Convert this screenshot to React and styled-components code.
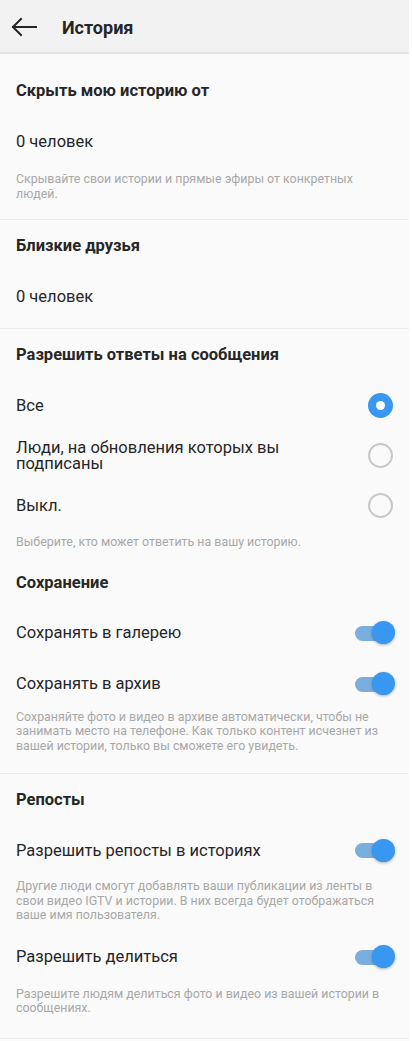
import React from 'react';
import styled, { createGlobalStyle } from 'styled-components';

const GlobalStyle = createGlobalStyle`
  html, body {
    margin: 0;
    padding: 0;
    background: #ffffff;
  }
  body {
    font-family: Roboto, "Noto Sans", "Liberation Sans", sans-serif;
    -webkit-font-smoothing: antialiased;
  }
`;

const Page = styled.div`
  width: 409px;
  min-height: 1041px;
  background: #fafafa;
  color: #262626;
`;

const Header = styled.header`
  height: 52px;
  display: flex;
  align-items: center;
  background: #f2f2f2;
  border-bottom: 2px solid #e3e3e3;
  padding-left: 11px;
`;

const BackButton = styled.button`
  border: 0;
  background: none;
  padding: 0;
  width: 26px;
  height: 22px;
  display: flex;
  align-items: center;
  margin-top: 2px;
`;

const HeaderTitle = styled.h1`
  margin: 0 0 0 25px;
  font-size: 18px;
  font-weight: 700;
  color: #262626;
  padding-top: 2px;
`;

const Content = styled.main`
  padding-top: 11px;
`;

const Section = styled.section`
  padding-bottom: ${p => p.$pb || 0}px;
  border-bottom: 1px solid #ececec;
`;

const Row = styled.div`
  height: ${p => p.$h || 51}px;
  margin-top: ${p => p.$mt || 0}px;
  display: flex;
  align-items: center;
  justify-content: space-between;
  padding: 0 16px;
`;

const SectionTitle = styled.div`
  font-size: 16.5px;
  font-weight: 700;
  color: #262626;
`;

const Label = styled.div`
  font-size: 16.5px;
  color: #262626;
  line-height: 16px;
  max-width: 290px;
`;

const Description = styled.p`
  margin: ${p => p.$mt || 0}px 0 0;
  padding: 0 16px;
  font-size: 12.4px;
  line-height: 14.5px;
  color: #a8a8a8;
  max-width: 376px;
`;

const Radio = styled.span`
  box-sizing: border-box;
  width: 25px;
  height: 25px;
  border-radius: 50%;
  flex-shrink: 0;
  border: ${p => (p.$checked ? 'none' : '2px solid #c8c8c8')};
  background: ${p => (p.$checked ? '#3897f0' : 'transparent')};
  display: flex;
  align-items: center;
  justify-content: center;
  &::after {
    content: '';
    display: ${p => (p.$checked ? 'block' : 'none')};
    width: 9px;
    height: 9px;
    border-radius: 50%;
    background: #fff;
  }
`;

const Toggle = styled.span`
  position: relative;
  width: 40px;
  height: 24px;
  margin-right: -2px;
  flex-shrink: 0;
  display: flex;
  align-items: center;
  &::before {
    content: '';
    width: 36px;
    height: 15px;
    border-radius: 8px;
    background: #7aaedf;
  }
  &::after {
    content: '';
    position: absolute;
    right: 0;
    top: 0;
    width: 23px;
    height: 23px;
    border-radius: 50%;
    background: #3897f0;
    box-shadow: 0 1px 3px rgba(0, 0, 0, 0.3);
  }
`;

const BackArrow = () => (
  <svg width="26" height="20" viewBox="0 0 26 20" fill="none">
    <path d="M25 10H2M10 2L2 10l8 8" stroke="#262626" strokeWidth="2" strokeLinecap="square" />
  </svg>
);

export default function App() {
  return (
    <>
      <GlobalStyle />
      <Page>
        <Header>
          <BackButton aria-label="Назад">
            <BackArrow />
          </BackButton>
          <HeaderTitle>История</HeaderTitle>
        </Header>
        <Content>
          <Section $pb={18}>
            <Row><SectionTitle>Скрыть мою историю от</SectionTitle></Row>
            <Row><Label>0 человек</Label></Row>
            <Description $mt={5}>
              Скрывайте свои истории и прямые эфиры от конкретных людей.
            </Description>
          </Section>

          <Section $pb={6}>
            <Row><SectionTitle>Близкие друзья</SectionTitle></Row>
            <Row><Label>0 человек</Label></Row>
          </Section>

          <Section $pb={20}>
            <Row><SectionTitle>Разрешить ответы на сообщения</SectionTitle></Row>
            <Row>
              <Label>Все</Label>
              <Radio $checked />
            </Row>
            <Row $h={49}>
              <Label>Люди, на обновления которых вы подписаны</Label>
              <Radio />
            </Row>
            <Row>
              <Label>Выкл.</Label>
              <Radio />
            </Row>
            <Description $mt={4}>Выберите, кто может ответить на вашу историю.</Description>
            <Row $mt={7}><SectionTitle>Сохранение</SectionTitle></Row>
            <Row>
              <Label>Сохранять в галерею</Label>
              <Toggle />
            </Row>
            <Row>
              <Label>Сохранять в архив</Label>
              <Toggle />
            </Row>
            <Description>
              Сохраняйте фото и видео в архиве автоматически, чтобы не занимать место на телефоне. Как только контент исчезнет из вашей истории, только вы сможете его увидеть.
            </Description>
          </Section>

          <Section $pb={22}>
            <Row><SectionTitle>Репосты</SectionTitle></Row>
            <Row>
              <Label>Разрешить репосты в историях</Label>
              <Toggle />
            </Row>
            <Description $mt={3}>
              Другие люди смогут добавлять ваши публикации из ленты в свои видео IGTV и истории. В них всегда будет отображаться ваше имя пользователя.
            </Description>
            <Row $mt={9}>
              <Label>Разрешить делиться</Label>
              <Toggle />
            </Row>
            <Description $mt={4}>
              Разрешите людям делиться фото и видео из вашей истории в сообщениях.
            </Description>
          </Section>
        </Content>
      </Page>
    </>
  );
}
